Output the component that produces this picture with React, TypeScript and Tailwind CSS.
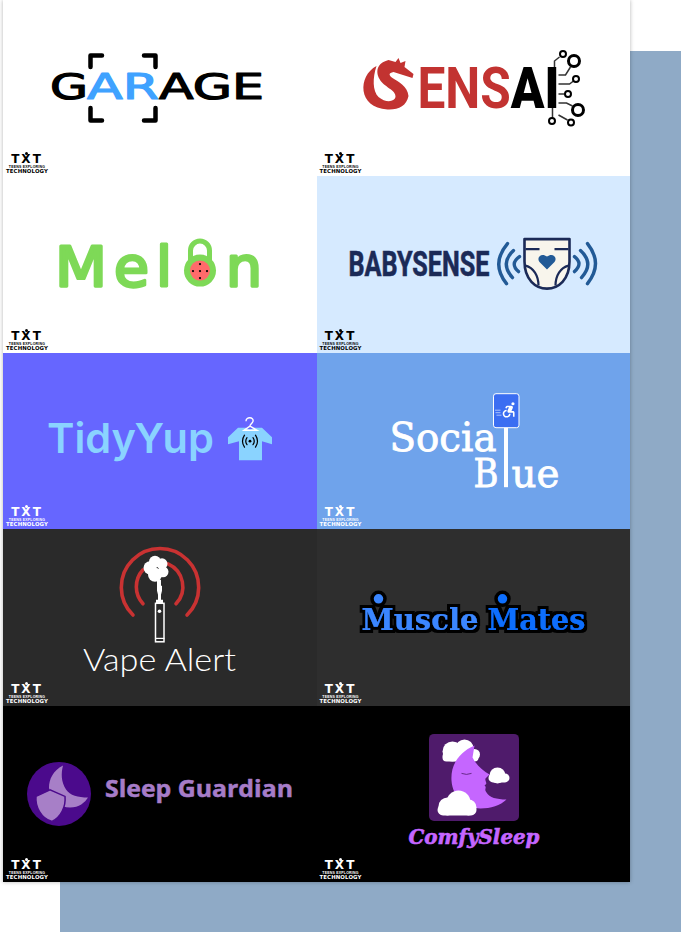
import React from 'react';
import { MdAccessibleForward } from 'react-icons/md';

const ROBOTO = 'Roboto, sans-serif';
const DEJAVU = '"DejaVu Sans", sans-serif';
const SERIF = '"DejaVu Serif", serif';

const TxtBadge: React.FC<{ light?: boolean }> = ({ light }) => (
  <div className={`relative z-10 mb-[2px] ml-[3px] flex w-[42px] flex-col items-center ${light ? 'text-white' : 'text-black'}`}>
    <div className="relative h-[11px] font-['DejaVu_Sans',sans-serif] text-[12px] font-bold leading-[12px] tracking-[2px]">
      TXT
      <span className={`absolute left-[14px] top-[-1px] h-[3px] w-[3px] rounded-full ${light ? 'bg-white' : 'bg-black'}`} />
    </div>
    <div className="mt-[1px] whitespace-nowrap font-['Liberation_Sans',sans-serif] text-[3.5px] font-bold leading-[4px] tracking-[0.2px]">TEENS EXPLORING</div>
    <div className="whitespace-nowrap font-['DejaVu_Sans',sans-serif] text-[5.4px] font-bold leading-[5px] tracking-[0.1px]">TECHNOLOGY</div>
  </div>
);

const GarageLogo = () => (
  <svg className="absolute inset-0 h-full w-full" viewBox="3 0 313.5 176.4">
    <g fill="none" stroke="#000" strokeWidth="4.5" strokeLinecap="round" strokeLinejoin="round">
      <path d="M102 55.5H90.5V67M144 55.5H155.5V67M90.5 108V120.5H102M155.5 108V120.5H144" />
    </g>
    <text y="99" fontFamily={DEJAVU} fontWeight="400" fontSize="36" stroke="#000" strokeWidth="1.2" strokeLinejoin="round" strokeLinecap="round">
      <tspan x="50" textLength="38" lengthAdjust="spacingAndGlyphs">G</tspan>
      <tspan x="87" textLength="72" lengthAdjust="spacingAndGlyphs" fill="#3FA2FF" stroke="#3FA2FF">AR</tspan>
      <tspan x="159" textLength="105" lengthAdjust="spacingAndGlyphs">AGE</tspan>
    </text>
  </svg>
);

const SensaiLogo = () => (
  <svg className="absolute inset-0 h-full w-full" viewBox="316.5 0 313.5 176.4">
    <path fill="#C23331" d="M376 66C357 76 357 108 387 109.5C398 110 406 106 408 96C407 86 398 82 392 78C388 75 388 73 393 72L412 78L413 74L404 67L405 61L400 63L398 58L395 62L388 60C376 63 375 72 379 79C383 87 396 90 395 97C394 102 385 103 378 97C372 91 372 78 376 66Z" />
    <text x="417" y="108" fontFamily={ROBOTO} fontWeight="700" fontSize="57" fill="#C23331" textLength="142" lengthAdjust="spacingAndGlyphs">
      ENS<tspan fill="#000" fontWeight="900">AI</tspan>
    </text>
    <g fill="none" stroke="#333" strokeWidth="1.5">
      <path d="M554 67V61L559 57M558 75H565L570 67M558 84H569L573 81M558 94H564M558 103H566L572 106M552 108V118M558 115L567 120" />
    </g>
    <g fill="#fff" stroke="#000">
      <circle cx="562.5" cy="54" r="3" strokeWidth="2" />
      <circle cx="573.5" cy="61" r="5.5" strokeWidth="3" />
      <circle cx="575.5" cy="79" r="3" strokeWidth="2" />
      <circle cx="567.5" cy="94" r="3" strokeWidth="2" />
      <circle cx="577.5" cy="110" r="5.5" strokeWidth="3" />
      <circle cx="551.5" cy="121" r="3" strokeWidth="2" />
      <circle cx="570.5" cy="122.5" r="3" strokeWidth="2" />
    </g>
  </svg>
);

const MelonLogo = () => (
  <svg className="absolute inset-0 h-full w-full" viewBox="3 176.4 313.5 176.4">
    <text y="286.5" fontFamily={DEJAVU} fontWeight="400" fontSize="56" fill="#7ED957" stroke="#7ED957" strokeWidth="3" strokeLinejoin="round" strokeLinecap="round">
      <tspan x="55" textLength="52" lengthAdjust="spacingAndGlyphs">M</tspan>
      <tspan x="114" textLength="35" lengthAdjust="spacingAndGlyphs">e</tspan>
      <tspan x="156" textLength="16" lengthAdjust="spacingAndGlyphs">l</tspan>
      <tspan x="184" fill="transparent" stroke="none">o</tspan>
      <tspan x="226" textLength="36" lengthAdjust="spacingAndGlyphs">n</tspan>
    </text>
    <path d="M190.5 262V251A9.5 9.5 0 0 1 209.5 251V262" fill="none" stroke="#7ED957" strokeWidth="5" />
    <circle cx="200" cy="271" r="16" fill="#7ED957" />
    <circle cx="200" cy="271" r="10" fill="#FF6B6B" />
    <g fill="#000">
      <circle cx="200" cy="264.5" r="1.1" />
      <circle cx="193" cy="271.5" r="1.1" />
      <circle cx="200" cy="271.5" r="1.1" />
      <circle cx="207" cy="271.5" r="1.1" />
      <circle cx="200" cy="278.5" r="1.1" />
    </g>
  </svg>
);

const BabysenseLogo = () => (
  <svg className="absolute inset-0 h-full w-full" viewBox="316.5 176.4 313.5 176.4">
    <text x="348" y="276.5" fontFamily={ROBOTO} fontWeight="700" fontSize="34.5" fill="#1B2A57" stroke="#1B2A57" strokeWidth="0.6" textLength="141" lengthAdjust="spacingAndGlyphs">BABYSENSE</text>
    <g fill="none" stroke="#225A96" strokeWidth="3.4" strokeLinecap="round">
      <path d="M507 244Q490 264 506 284M513 251Q499 264 512 278M519 257Q509 264 518 272" />
      <path d="M587 244Q603 264 587 284M580 251Q594 264 581 278M574 257Q583 264 574 272" />
    </g>
    <path d="M524 239.5H569V262C569 280 558 289 546.5 289C535 289 524 280 524 262Z" fill="#F8F5EC" stroke="#1B2A57" strokeWidth="2.6" strokeLinejoin="round" />
    <path d="M525 249.5H539M554 249.5H568M525 266C533 268 538 276 538 286M568 266C560 268 555 276 555 286" fill="none" stroke="#1B2A57" strokeWidth="2.2" />
    <path d="M546.5 270L539 262.5C535.5 258 541 252.5 546.5 257C552 252.5 557.5 258 554 262.5Z" fill="#225A96" />
  </svg>
);

const TidyYupLogo = () => (
  <svg className="absolute inset-0 h-full w-full" viewBox="3 352.8 313.5 176.4">
    <text x="47" y="453" fontFamily="Inter, sans-serif" fontWeight="600" fontSize="41" fill="#8AD3FF" textLength="167" lengthAdjust="spacingAndGlyphs">TidyYup</text>
    <path d="M228 437L238 427.5H246Q250 431 254 427.5H262L272 437V444L262 441V460H239V441L228 444Z" fill="#8AD3FF" />
    <path d="M246 421C246 416 254 417 253 421C252 424 250 424 250 426L257 430H244L250 426" fill="none" stroke="#fff" strokeWidth="1.4" />
    <circle cx="250" cy="441" r="1.4" fill="#000" />
    <g fill="none" stroke="#000" strokeWidth="1.2" strokeLinecap="round">
      <path d="M247 437.5Q244.5 441 247 444.5M253 437.5Q255.5 441 253 444.5M244.5 435Q240.5 441 244.5 447M255.5 435Q259.5 441 255.5 447" />
    </g>
  </svg>
);

const SocialBlueLogo = () => (
  <svg className="absolute inset-0 h-full w-full" viewBox="316.5 352.8 313.5 176.4">
    <text y="451" fontFamily={SERIF} fontWeight="400" fontSize="40" fill="#fff" stroke="#fff" strokeWidth="0.8">
      <tspan x="389" textLength="107" lengthAdjust="spacingAndGlyphs">Socia</tspan>
      <tspan x="500" fill="transparent" stroke="none">l</tspan>
    </text>
    <text y="487" fontFamily={SERIF} fontWeight="400" fontSize="40" fill="#fff" stroke="#fff" strokeWidth="0.8">
      <tspan x="473" textLength="25" lengthAdjust="spacingAndGlyphs">B</tspan>
      <tspan x="500" fill="transparent" stroke="none">l</tspan>
      <tspan x="511" textLength="48" lengthAdjust="spacingAndGlyphs">ue</tspan>
    </text>
    <rect x="503.5" y="425" width="4" height="62" fill="#fff" />
    <rect x="493" y="393.5" width="25.5" height="34" rx="2.5" fill="#3B6EF2" stroke="#fff" strokeWidth="1" />
    <MdAccessibleForward x="499" y="400" size="19" color="#fff" />
    <path d="M494.5 410H500M495 412.5H500M496 415H501" stroke="#C8D8FF" strokeWidth="0.8" />
  </svg>
);

const VapeAlertLogo = () => (
  <svg className="absolute inset-0 h-full w-full" viewBox="3 529.2 313.5 176.4">
    <g fill="none" stroke="#C93232" strokeWidth="3.6" strokeLinecap="round">
      <path d="M133 615.2A38.7 38.7 0 1 1 187 615.2" />
      <path d="M143 604A25 25 0 0 1 143 570M168 564A25 25 0 0 1 176 604" />
    </g>
    <g fill="#fff">
      <circle cx="150" cy="568" r="6.5" />
      <circle cx="155" cy="562" r="6" />
      <circle cx="162" cy="564" r="5.5" />
      <circle cx="163" cy="572" r="5.5" />
      <circle cx="155" cy="575" r="7" />
      <rect x="157" y="580" width="4" height="7" />
      <path d="M157 586H162V591L161 595V600H163V604H156V600H158V595L157 591Z" />
    </g>
    <rect x="155.5" y="603.5" width="8.5" height="38.5" fill="#2A2A2A" stroke="#fff" strokeWidth="1.5" />
    <circle cx="159.5" cy="611.5" r="1.8" fill="#fff" />
    <rect x="155" y="638" width="9.5" height="1.2" fill="#fff" />
    <text x="83" y="671" fontFamily="Lato, sans-serif" fontWeight="300" fontSize="31" fill="#fff" textLength="153" lengthAdjust="spacingAndGlyphs">Vape Alert</text>
  </svg>
);

const MuscleMatesLogo = () => (
  <svg className="absolute inset-0 h-full w-full" viewBox="316.5 529.2 313.5 176.4">
    <defs>
      <filter id="muscle-outline" x="-10%" y="-30%" width="120%" height="160%">
        <feMorphology in="SourceGraphic" operator="dilate" radius="0.5" result="fat" />
        <feMorphology in="SourceAlpha" operator="dilate" radius="2.8" result="outline" />
        <feMerge>
          <feMergeNode in="outline" />
          <feMergeNode in="fat" />
        </feMerge>
      </filter>
    </defs>
    <circle cx="378" cy="599" r="6.5" fill="#3A86FF" stroke="#000" strokeWidth="3.5" />
    <circle cx="502" cy="599" r="6.5" fill="#0D6EFD" stroke="#000" strokeWidth="3.5" />
    <g fontFamily={SERIF} fontWeight="700" fontSize="30" filter="url(#muscle-outline)">
      <text x="361" y="630" fill="#3A86FF" textLength="117" lengthAdjust="spacingAndGlyphs">Muscle</text>
      <text x="487" y="630" fill="#0D6EFD" textLength="98" lengthAdjust="spacingAndGlyphs">Mates</text>
    </g>
  </svg>
);

const SleepGuardianLogo = () => (
  <svg className="absolute inset-0 h-full w-full" viewBox="3 705.6 313.5 176.4">
    <circle cx="59" cy="793.5" r="32" fill="#4B0A8C" />
    <path d="M63 765C53 770 49 779 49 787C50 800 60 807 70 807C79 807 85 802 88 797C78 797 70 795 66 789C61 781 61 773 63 765Z" fill="#A77FC7" />
    <path d="M50 789.5L36 796C35 806 41 818 52 821C61 817 66 806 65 796Z" fill="#A77FC7" stroke="#4B0A8C" strokeWidth="1.5" />
    <text x="105" y="797" fontFamily='"Open Sans", sans-serif' fontWeight="700" fontSize="24" fill="#A67CC8" stroke="#A67CC8" strokeWidth="0.5" textLength="188" lengthAdjust="spacingAndGlyphs">Sleep Guardian</text>
  </svg>
);

const ComfySleepLogo = () => (
  <svg className="absolute inset-0 h-full w-full" viewBox="316.5 705.6 313.5 176.4">
    <rect x="428.5" y="733.5" width="90" height="87" rx="5" fill="#4F1B6B" />
    <g fill="#fff">
      <circle cx="452" cy="751" r="10" />
      <circle cx="464" cy="748" r="9" />
      <circle cx="474" cy="754" r="5.5" />
      <rect x="442" y="752" width="36" height="9" rx="4" />
      <circle cx="497" cy="775" r="8" />
      <rect x="488" y="773" width="21" height="9" rx="4.5" />
    </g>
    <path d="M474 745C458 752 450 765 451 780C452 796 464 807 480 808C490 808 500 805 506 799C496 799 489 797 486 792C483 789 487 787 484 785C488 783 484 781 485 778L489 774C482 770 476 765 472 757Z" fill="#C566FF" />
    <path d="M461 773Q466 775 471 773" fill="none" stroke="#4F1B6B" strokeWidth="0.8" />
    <g fill="#fff">
      <circle cx="447" cy="806" r="9" />
      <circle cx="458" cy="802" r="12" />
      <circle cx="468" cy="807" r="8" />
      <rect x="437" y="804" width="39" height="11" rx="5.5" />
    </g>
    <text x="408" y="844" fontFamily={SERIF} fontWeight="700" fontStyle="italic" fontSize="20" fill="#C566FF" stroke="#C566FF" strokeWidth="0.6" textLength="131" lengthAdjust="spacingAndGlyphs">ComfySleep</text>
  </svg>
);

const CARDS = [
  { id: 'garage', bg: 'bg-white', Logo: GarageLogo, light: false },
  { id: 'sensai', bg: 'bg-white', Logo: SensaiLogo, light: false },
  { id: 'melon', bg: 'bg-white', Logo: MelonLogo, light: false },
  { id: 'babysense', bg: 'bg-[#D6EAFF]', Logo: BabysenseLogo, light: false },
  { id: 'tidyyup', bg: 'bg-[#6666FF]', Logo: TidyYupLogo, light: true },
  { id: 'socialblue', bg: 'bg-[#6FA3EB]', Logo: SocialBlueLogo, light: true },
  { id: 'vape', bg: 'bg-[#2A2A2A]', Logo: VapeAlertLogo, light: true },
  { id: 'muscle', bg: 'bg-[#2E2E2E]', Logo: MuscleMatesLogo, light: true },
  { id: 'guardian', bg: 'bg-black', Logo: SleepGuardianLogo, light: true },
  { id: 'comfy', bg: 'bg-black', Logo: ComfySleepLogo, light: true },
];

const App: React.FC = () => {
  return (
    <div className="relative h-[932px] w-[681px] overflow-hidden bg-white">
      <div className="absolute bottom-0 left-[60px] right-0 top-[51px] bg-[#8FAAC6]" />
      <div className="relative ml-[3px] grid w-[627px] grid-cols-2 shadow-[0_0_4px_rgba(0,0,0,0.3)]">
        {CARDS.map(({ id, bg, Logo, light }) => (
          <div key={id} className={`relative flex h-[176.4px] items-end ${bg}`}>
            <Logo />
            <TxtBadge light={light} />
          </div>
        ))}
      </div>
    </div>
  );
};

export default App;
